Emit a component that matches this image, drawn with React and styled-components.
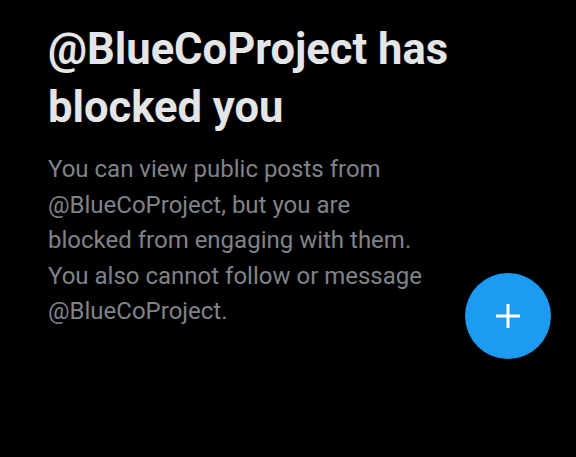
import React from 'react'
import styled, { createGlobalStyle } from 'styled-components'

const GlobalStyle = createGlobalStyle`
  html, body {
    margin: 0;
    background: #000;
  }
  body {
    font-family: Roboto, "Noto Sans", sans-serif;
  }
`

const Screen = styled.main`
  position: relative;
  width: 576px;
  height: 457px;
  overflow: hidden;
  background: #000;
  box-sizing: border-box;
  padding: 21px 0 0 48px;
`

const Content = styled.section`
  width: 420px;
`

const Title = styled.h1`
  margin: 0;
  font-size: 43.5px;
  line-height: 58px;
  font-weight: 700;
  color: #e3e5e6;
`

const Body = styled.p`
  margin: 15px 0 0;
  max-width: 385px;
  font-size: 24px;
  line-height: 35.5px;
  font-weight: 400;
  color: #7f8388;
`

const Fab = styled.button`
  position: absolute;
  left: 465px;
  top: 273px;
  width: 86px;
  height: 86px;
  border: none;
  border-radius: 50%;
  background: #1d9bf0;
  display: flex;
  align-items: center;
  justify-content: center;
  padding: 0;
`

export default function App() {
  return (
    <>
      <GlobalStyle />
      <Screen>
        <Content>
          <Title>@BlueCoProject has blocked you</Title>
          <Body>
            You can view public posts from @BlueCoProject, but you are blocked
            from engaging with them. You also cannot follow or message
            @BlueCoProject.
          </Body>
        </Content>
        <Fab aria-label="New post">
          <svg width="26" height="26" viewBox="0 0 26 26">
            <path d="M13 1v24M1 13h24" stroke="#fff" strokeWidth="3" />
          </svg>
        </Fab>
      </Screen>
    </>
  )
}
